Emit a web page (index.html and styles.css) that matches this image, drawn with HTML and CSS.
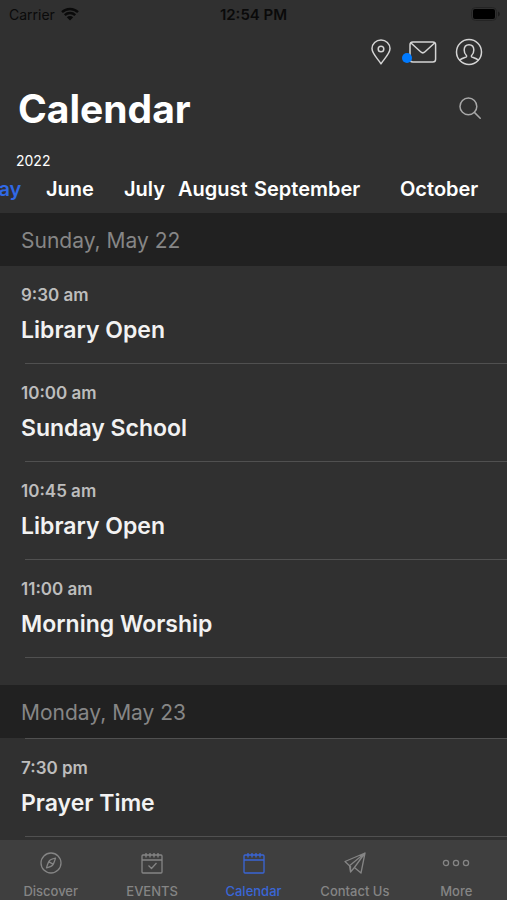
FILE: index.html
```html
<!DOCTYPE html>
<html lang="en">

<head>
    <meta charset="UTF-8">
    <meta name="viewport" content="width=device-width, initial-scale=1.0">
    <title>Calendar</title>
    <link rel="stylesheet" href="styles.css">
</head>

<body>
    <div class="status_bar">
        <div class="carrier">
            <span>Carrier</span>
            <svg width="18" height="14" viewBox="0 0 18 14">
                <path d="M1 5.2a11.5 11.5 0 0 1 16 0M3.8 8.1a7.4 7.4 0 0 1 10.4 0" fill="none" stroke="#0a0a0a" stroke-width="2.4" />
                <path d="M9 13.6L5.8 10.3a4.6 4.6 0 0 1 6.4 0z" fill="#0a0a0a" />
            </svg>
        </div>
        <span class="clock">12:54 PM</span>
        <div class="battery">
            <svg width="29" height="14" viewBox="0 0 29 14">
                <rect x="0.5" y="0.5" width="25" height="13" rx="4" fill="none" stroke="#242424" />
                <rect x="2" y="2" width="22" height="10" rx="2" fill="#000" />
                <path d="M27 4.5a2.6 2.6 0 0 1 0 5z" fill="#1c1c1c" />
            </svg>
        </div>
    </div>

    <header>
        <div class="tools">
            <button class="icon_btn" aria-label="Locations">
                <svg width="20" height="26" viewBox="0 0 20 26">
                    <path d="M10 24.8C7.6 20.6 1 15 1 9.6a9 8.6 0 0 1 18 0C19 15 12.4 20.6 10 24.8z" />
                    <circle cx="10" cy="10" r="2.8" />
                </svg>
            </button>
            <button class="icon_btn mail" aria-label="Messages">
                <svg width="28" height="24" viewBox="0 0 28 24">
                    <rect x="1" y="2" width="25.6" height="20" rx="2.8" />
                    <path d="M2 3l9.6 8.8a3.2 3.2 0 0 0 4.4 0L25.6 3" />
                </svg>
                <span class="dot"></span>
            </button>
            <button class="icon_btn" aria-label="Profile">
                <svg width="28" height="28" viewBox="0 0 28 28">
                    <circle cx="14" cy="14" r="12.5" />
                    <path d="M14 6.8c-3 0-4.8 2.2-4.8 5.3 0 2.1.7 4 2 5.1.6.6.6 1.5-.3 1.9-2.3.8-4.5 1.3-6.1 3M14 6.8c3 0 4.8 2.2 4.8 5.3 0 2.1-.7 4-2 5.1-.6.6-.6 1.5.3 1.9 2.3.8 4.5 1.3 6.1 3" />
                </svg>
            </button>
        </div>
        <div class="title_row">
            <h1>Calendar</h1>
            <button class="icon_btn search" aria-label="Search">
                <svg width="22" height="22" viewBox="0 0 22 22">
                    <circle cx="9.4" cy="9.4" r="8.4" />
                    <path d="M15.4 15.4l5.8 5.8" />
                </svg>
            </button>
        </div>
        <p class="year">2022</p>
        <nav class="months">
            <button class="current">May</button>
            <button>June</button>
            <button>July</button>
            <button>August</button>
            <button>September</button>
            <button>October</button>
        </nav>
    </header>

    <main>
        <section>
            <h2>Sunday, May 22</h2>
            <ul>
                <li>
                    <time>9:30 am</time>
                    <h3>Library Open</h3>
                </li>
                <li>
                    <time>10:00 am</time>
                    <h3>Sunday School</h3>
                </li>
                <li>
                    <time>10:45 am</time>
                    <h3>Library Open</h3>
                </li>
                <li>
                    <time>11:00 am</time>
                    <h3>Morning Worship</h3>
                </li>
            </ul>
        </section>
        <section>
            <h2>Monday, May 23</h2>
            <ul class="lined">
                <li>
                    <time>7:30 pm</time>
                    <h3>Prayer Time</h3>
                </li>
            </ul>
        </section>
    </main>

    <nav class="tab_bar">
        <a href="#discover">
            <svg width="22" height="22" viewBox="0 0 22 22">
                <circle cx="11" cy="11" r="10" />
                <path d="M15.5 6.2c-3.2.6-5.7 1.6-6.7 3.4-.9 1.7-1.7 4-2.3 6.2 3.2-.6 5.7-1.6 6.7-3.4.9-1.7 1.7-4 2.3-6.2zM8.8 9.600l4.400 2.800" />
            </svg>
            <span>Discover</span>
        </a>
        <a href="#events">
            <svg width="22" height="22" viewBox="0 0 22 22">
                <rect x="1" y="3" width="20" height="18" rx="1" />
                <path d="M1 8h20M5 1v4.5M9 1v4.5M13 1v4.5M17 1v4.5M7.5 13.5l3 3 5-5.5" />
            </svg>
            <span>EVENTS</span>
        </a>
        <a href="#calendar" class="active">
            <svg width="22" height="22" viewBox="0 0 22 22">
                <rect x="1" y="3" width="20" height="18" rx="1" />
                <path d="M1 8h20M5 1v4.5M9 1v4.5M13 1v4.5M17 1v4.5" />
            </svg>
            <span>Calendar</span>
        </a>
        <a href="#contact">
            <svg width="22" height="22" viewBox="0 0 22 22">
                <path d="M21 1L1 9.5l4.5 4.2L21 1l-4 20-6.6-5.5L21 1M5.5 13.7L6.5 20l3.9-4.5M6.5 20V14" />
            </svg>
            <span>Contact Us</span>
        </a>
        <a href="#more">
            <svg width="28" height="22" viewBox="0 0 28 22">
                <circle cx="4" cy="11" r="2.6" />
                <circle cx="14" cy="11" r="2.6" />
                <circle cx="24" cy="11" r="2.6" />
            </svg>
            <span>More</span>
        </a>
    </nav>
</body>

</html>
```
FILE: styles.css
```css
* {
    margin: 0;
    padding: 0;
    box-sizing: border-box;
}

body {
    display: flex;
    flex-direction: column;
    height: 100vh;
    overflow: hidden;
    background-color: #303030;
    color: #fff;
    font-family: Inter, "Liberation Sans", sans-serif;
}

button {
    border: none;
    background: none;
    color: inherit;
    font-family: inherit;
    cursor: pointer;
}

svg {
    display: block;
}

ul {
    list-style: none;
}

.status_bar {
    display: grid;
    grid-template-columns: 1fr auto 1fr;
    align-items: center;
    height: 28px;
    padding: 0 7px;
    color: #0a0a0a;
    font-size: 14px;
}

.carrier {
    display: flex;
    align-items: center;
    gap: 6px;
    padding-left: 2px;
}

.clock {
    font-size: 15px;
    font-weight: 600;
}

.battery {
    justify-self: end;
}

header {
    flex: none;
}

.tools {
    display: flex;
    justify-content: flex-end;
    align-items: center;
    gap: 18px;
    height: 48px;
    padding-right: 24px;
}

.icon_btn svg {
    fill: none;
    stroke: #d4d4d4;
    stroke-width: 1.5;
    stroke-linecap: round;
    stroke-linejoin: round;
}

.mail {
    position: relative;
}

.dot {
    position: absolute;
    left: -7px;
    bottom: 1px;
    width: 10px;
    height: 10px;
    border-radius: 50%;
    background-color: #007aff;
}

.title_row {
    display: flex;
    justify-content: space-between;
    align-items: center;
    height: 64px;
    padding: 0 26px 0 18px;
}

h1 {
    font-size: 39px;
    font-weight: 700;
}

.search svg {
    stroke: #a8a8a8;
}

.year {
    padding: 11px 16px 0;
    font-size: 14px;
    line-height: 20px;
}

.months {
    display: grid;
    grid-template-columns: 66px 78px 54px 76px 146px auto;
    height: 42px;
    margin-left: -20px;
    padding-top: 4px;
    overflow: hidden;
}

.months button {
    height: 28px;
    font-size: 20px;
    font-weight: 600;
    text-align: left;
}

.months .current {
    color: #3069e6;
}

main {
    flex: 1;
    min-height: 0;
    overflow: hidden;
}

section {
    margin-bottom: 27px;
}

h2 {
    height: 53px;
    padding-left: 21px;
    background-color: #212121;
    color: #868686;
    font-size: 21px;
    font-weight: 400;
    line-height: 55px;
}

section ul {
    padding-left: 25px;
}

li {
    height: 98px;
    padding-top: 19px;
    border-bottom: 1px solid #505050;
}

.lined li:first-child {
    height: 99px;
    border-top: 1px solid #505050;
}

/* text starts a little before the divider */
time,
h3 {
    display: block;
    margin-left: -4px;
}

time {
    color: #bdbdbd;
    font-size: 17px;
    font-weight: 600;
    line-height: 20px;
}

h3 {
    padding-top: 9px;
    color: #f2f2f2;
    font-size: 23px;
    font-weight: 600;
    line-height: 32px;
}

.tab_bar {
    display: flex;
    flex: none;
    height: 60px;
    background-color: #3f3f3f;
}

.tab_bar a {
    display: flex;
    flex: 1;
    flex-direction: column;
    align-items: center;
    gap: 9px;
    padding-top: 12px;
    color: #858585;
    font-size: 13px;
    font-weight: 500;
    line-height: 16px;
    text-decoration: none;
}

.tab_bar svg {
    fill: none;
    stroke: currentColor;
    stroke-width: 1.3;
    stroke-linejoin: round;
}

.tab_bar .active {
    color: #3a66d6;
}
```
